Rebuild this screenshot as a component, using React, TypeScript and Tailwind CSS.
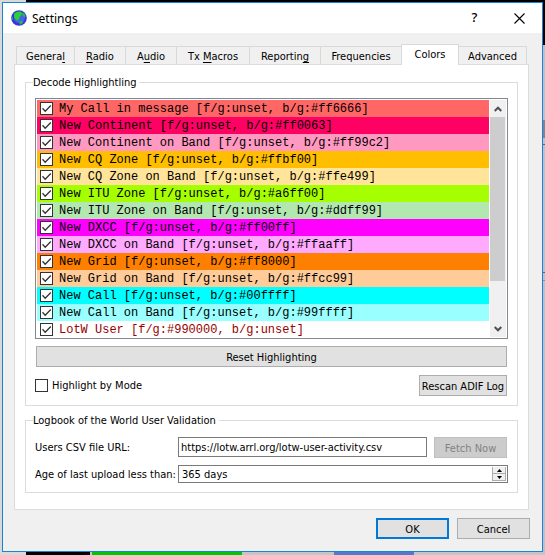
import { useId, useState } from "react";

const SANS = "font-['DejaVu_Sans_Condensed','DejaVu_Sans',sans-serif]";

const buttonBase =
  "h-[21px] shrink-0 border border-[#adadad] bg-[#e1e1e1] pt-[2px] text-center leading-[17px] whitespace-nowrap";

type Highlight = { label: string; row: string };

const highlights: Highlight[] = [
  { label: "My Call in message [f/g:unset, b/g:#ff6666]", row: "bg-[#ff6666]" },
  { label: "New Continent [f/g:unset, b/g:#ff0063]", row: "bg-[#ff0063]" },
  { label: "New Continent on Band [f/g:unset, b/g:#ff99c2]", row: "bg-[#ff99c2]" },
  { label: "New CQ Zone [f/g:unset, b/g:#ffbf00]", row: "bg-[#ffbf00]" },
  { label: "New CQ Zone on Band [f/g:unset, b/g:#ffe499]", row: "bg-[#ffe499]" },
  { label: "New ITU Zone [f/g:unset, b/g:#a6ff00]", row: "bg-[#a6ff00]" },
  { label: "New ITU Zone on Band [f/g:unset, b/g:#ddff99]", row: "bg-[#b2e8b0]" },
  { label: "New DXCC [f/g:unset, b/g:#ff00ff]", row: "bg-[#ff00ff]" },
  { label: "New DXCC on Band [f/g:unset, b/g:#ffaaff]", row: "bg-[#ffaaff]" },
  { label: "New Grid [f/g:unset, b/g:#ff8000]", row: "bg-[#ff8000]" },
  { label: "New Grid on Band [f/g:unset, b/g:#ffcc99]", row: "bg-[#ffcc99]" },
  { label: "New Call [f/g:unset, b/g:#00ffff]", row: "bg-[#00ffff]" },
  { label: "New Call on Band [f/g:unset, b/g:#99ffff]", row: "bg-[#99ffff]" },
  { label: "LotW User [f/g:#990000, b/g:unset]", row: "bg-white text-[#990000]" },
];

type Tab = { before: string; key?: string; after?: string; width: string };

const tabs: Tab[] = [
  { before: "Genera", key: "l", width: "w-[59px]" },
  { before: "", key: "R", after: "adio", width: "w-[52px]" },
  { before: "A", key: "u", after: "dio", width: "w-[52px]" },
  { before: "Tx ", key: "M", after: "acros", width: "w-[74px]" },
  { before: "Reportin", key: "g", width: "w-[72px]" },
  { before: "Frequencies", width: "w-[82px]" },
  { before: "Colors", width: "w-[58px]" },
  { before: "Advanced", width: "w-[69px]" },
];

function CheckBox({ id, initial }: { id: string; initial: boolean }) {
  const [on, setOn] = useState(initial);
  return (
    <span className="grid size-[13px] shrink-0">
      <input
        id={id}
        type="checkbox"
        checked={on}
        onChange={() => setOn(!on)}
        className="col-start-1 row-start-1 size-[13px] appearance-none border border-[#333333] bg-white"
      />
      {on && (
        <svg
          viewBox="0 0 13 13"
          className="pointer-events-none col-start-1 row-start-1 size-[13px]"
          fill="none"
          stroke="#333333"
          strokeWidth="1.3"
        >
          <path d="M2.5 6.3 5.2 9.2 10.8 3.5" />
        </svg>
      )}
    </span>
  );
}

function HighlightRow({ item }: { item: Highlight }) {
  const id = useId();
  return (
    <li className={`flex h-[17px] shrink-0 items-center gap-[6px] pl-[3px] ${item.row}`}>
      <CheckBox id={id} initial />
      <label
        htmlFor={id}
        className="pt-px font-['Liberation_Mono',monospace] text-[12px] leading-4 whitespace-pre"
      >
        {item.label}
      </label>
    </li>
  );
}

function Globe() {
  return (
    <svg viewBox="0 0 16 16" className="size-4">
      <circle cx="8" cy="8" r="7.8" fill="#3338dd" />
      <circle cx="8.5" cy="7.5" r="5.5" fill="#4a63e6" />
      <path d="M3.2 3.6 6 1.8l3.2-.4 1.6 1.2-.4 2.4-1.6 1.6-.8 2.2-1.4 1.6-1.8-.8-1.4-1.6-.4-2.6z" fill="#25d52c" />
      <path d="m11.2 2.4 2.4 1.4 1 2.6-1.4.6-1.7-1.8zM1 6.2l1 2.6-.6 1.4L.6 8zM8.4 11.4l2.4-.6 1.4 1-1.6 2.4-1.8.4z" fill="#1fc437" />
    </svg>
  );
}

export default function App() {
  return (
    <div className={`flex min-h-screen flex-col bg-[#c6c6c6] text-[11px] text-black ${SANS}`}>
      <div className="flex h-[2px]">
        <div className="w-[26px] bg-[#d9d9d9]" />
        <div className="flex-1 bg-black" />
      </div>

      <div className="flex">
        <div className="w-[2px] shrink-0 bg-[#d9d9d9]" />
        <main className="min-w-0 flex-1 border border-[#1883d7] bg-[#f0f0f0]">
          <header className="flex h-[30px] items-center bg-white pl-2">
            <Globe />
            <h1 className="ml-[5px] flex-1 pt-[2px] font-['Noto_Sans','Open_Sans',sans-serif] text-[12px] leading-4">
              Settings
            </h1>
            <button
              type="button"
              aria-label="Help"
              className="w-[45px] font-['Noto_Sans','Open_Sans',sans-serif] text-[13px] font-medium"
            >
              ?
            </button>
            <button type="button" aria-label="Close" className="flex w-[45px] justify-center">
              <svg viewBox="0 0 11 11" className="size-[11px]" stroke="#000" strokeWidth="1.1">
                <path d="M.5.5l10 10M10.5.5l-10 10" />
              </svg>
            </button>
          </header>

          <div className="pt-[11px] pr-3 pb-3 pl-[11px]">
            <div role="tablist" className="flex items-end pl-[2px]">
              {tabs.map((tab) => {
                const selected = tab.before === "Colors";
                return (
                  <button
                    key={tab.before + (tab.key ?? "")}
                    type="button"
                    role="tab"
                    aria-selected={selected}
                    className={`-mr-px border border-b-0 border-[#d9d9d9] whitespace-nowrap ${tab.width} ${
                      selected ? "z-10 -mb-px h-[21px] bg-white" : "h-[18px] bg-[#f0f0f0] pt-[2px]"
                    }`}
                  >
                    {tab.before}
                    {tab.key && <span className="underline underline-offset-2">{tab.key}</span>}
                    {tab.after}
                  </button>
                );
              })}
            </div>

            <section role="tabpanel" className="mr-px border border-[#dcdcdc] bg-white px-[10px] pt-[10px] pb-4">
              <fieldset className="min-w-0 border border-[#dcdcdc] px-[9px] pb-[9px]">
                <legend className="-ml-[2px] pt-[2px] pr-[3px] leading-3">Decode Highlightling</legend>

                <div className="mt-[9px] flex h-[241px] gap-px overflow-hidden border border-[#828790] bg-white p-px">
                  <ul className="flex min-w-0 flex-1 flex-col overflow-hidden">
                    {highlights.map((item) => (
                      <HighlightRow key={item.label} item={item} />
                    ))}
                  </ul>
                  <div className="flex w-4 shrink-0 flex-col bg-[#f0f0f0]">
                    <button type="button" aria-label="Scroll up" className="flex h-[17px] items-center justify-center">
                      <svg viewBox="0 0 8 6" className="h-[6px] w-2" fill="none" stroke="#505050" strokeWidth="2">
                        <path d="M.7 5 4 1.7 7.3 5" />
                      </svg>
                    </button>
                    <div className="mr-px h-[164px] bg-[#cdcdcd]" />
                    <button
                      type="button"
                      aria-label="Scroll down"
                      className="mt-auto flex h-[17px] items-center justify-center"
                    >
                      <svg viewBox="0 0 8 6" className="h-[6px] w-2" fill="none" stroke="#505050" strokeWidth="2">
                        <path d="M.7 1 4 4.3 7.3 1" />
                      </svg>
                    </button>
                  </div>
                </div>

                <div className="mt-[7px] flex px-px">
                  <button type="button" className={`flex-1 ${buttonBase}`}>
                    Reset Highlighting
                  </button>
                </div>

                <div className="mt-2 flex items-center pr-px">
                  <CheckBox id="by-mode" initial={false} />
                  <label htmlFor="by-mode" className="flex-1 pt-[2px] pl-1">
                    Highlight by Mode
                  </label>
                  <button type="button" className={`w-[88px] ${buttonBase}`}>
                    Rescan ADIF Log
                  </button>
                </div>
              </fieldset>

              <fieldset className="mt-[7px] min-w-0 border border-[#dcdcdc] px-[9px] pb-2">
                <legend className="-ml-[2px] pt-[2px] pr-[3px] leading-3">Logbook of the World User Validation</legend>

                <div className="mt-[10px] grid grid-cols-[143px_minmax(0,1fr)] items-center gap-y-[7px]">
                  <label htmlFor="csv-url" className="pt-[2px]">
                    Users CSV file URL:
                  </label>
                  <div className="flex h-[21px] items-start gap-[7px] pr-px">
                    <input
                      id="csv-url"
                      type="text"
                      defaultValue="https://lotw.arrl.org/lotw-user-activity.csv"
                      className="h-5 min-w-0 flex-1 border border-[#7a7a7a] bg-white px-[2px]"
                    />
                    <button
                      type="button"
                      disabled
                      className="h-[21px] w-[73px] border border-[#bfbfbf] bg-[#cccccc] pt-[2px] leading-[17px] text-[#838383]"
                    >
                      Fetch Now
                    </button>
                  </div>

                  <label htmlFor="upload-age" className="pt-[2px]">
                    Age of last upload less than:
                  </label>
                  <div className="flex h-[18px] border border-[#7a7a7a] bg-white">
                    <input
                      id="upload-age"
                      type="text"
                      role="spinbutton"
                      aria-valuenow={365}
                      defaultValue="365 days"
                      className="min-w-0 flex-1 px-[3px] pt-[2px]"
                    />
                    <div className="my-px mr-px flex w-[14px] flex-col border border-t-0 border-[#adadad] bg-[#f0f0f0]">
                      <button
                        type="button"
                        aria-label="Increase"
                        className="flex flex-1 items-center justify-center border-b border-[#adadad]"
                      >
                        <svg viewBox="0 0 5 3" className="h-[3px] w-[5px]">
                          <path d="M0 3h5L2.5 0z" />
                        </svg>
                      </button>
                      <button type="button" aria-label="Decrease" className="flex flex-1 items-center justify-center">
                        <svg viewBox="0 0 5 3" className="h-[3px] w-[5px]">
                          <path d="M0 0h5L2.5 3z" />
                        </svg>
                      </button>
                    </div>
                  </div>
                </div>
              </fieldset>
            </section>

            <footer className="mt-2 flex justify-end gap-2">
              <button
                type="button"
                className="h-[21px] w-[73px] border-2 border-[#0078d7] bg-[#e1e1e1] pt-[2px] leading-[15px]"
              >
                OK
              </button>
              <button type="button" className={`w-[73px] ${buttonBase}`}>
                Cancel
              </button>
            </footer>
          </div>
        </main>
        <div className="flex w-[2px] shrink-0 flex-col bg-[#bcc2c9]">
          <div className="h-[43px] bg-black" />
          <div className="mt-[75px] h-[18px] bg-[#80868c]" />
          <div className="mt-[6px] h-px bg-[#60666c]" />
          <div className="mt-[127px] h-px bg-[#60666c]" />
          <div className="mt-[7px] h-px bg-[#8a8f95]" />
        </div>
      </div>

      <div className="flex flex-1">
        <div className="w-[26px] bg-[#d9d9d9]" />
        <div className="w-16 bg-black" />
        <div className="ml-[2px] w-[150px] bg-[#00c800]" />
        <div className="ml-[92px] w-20 bg-[#5578c8]" />
      </div>
    </div>
  );
}
